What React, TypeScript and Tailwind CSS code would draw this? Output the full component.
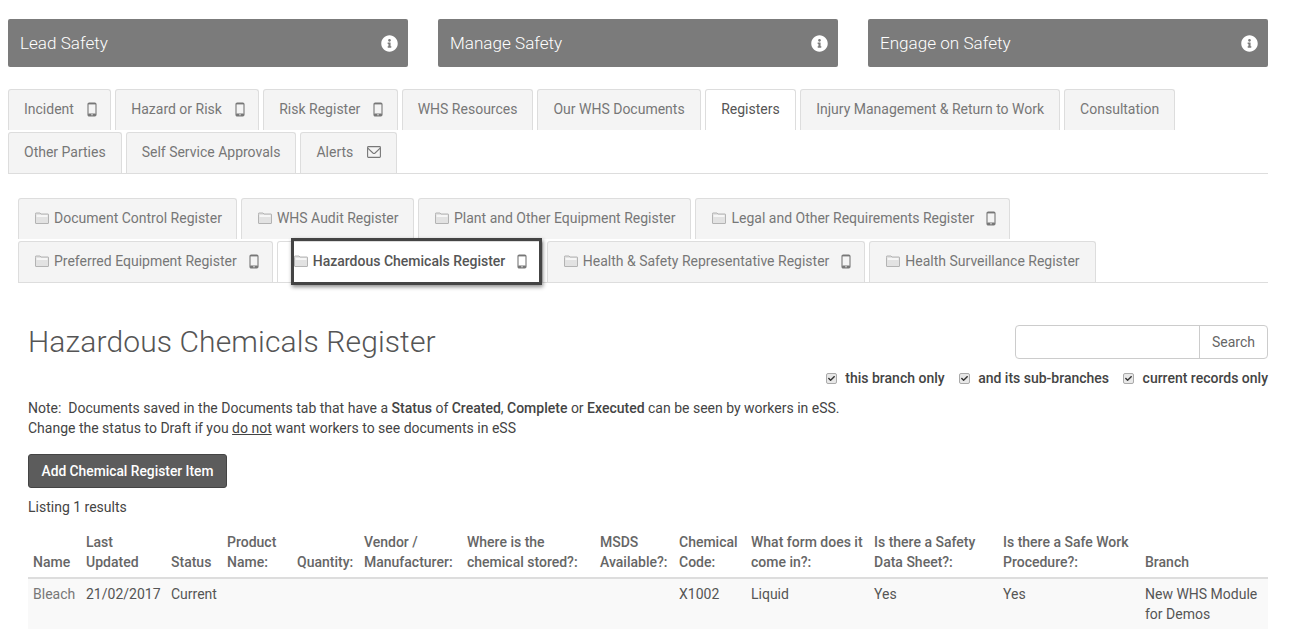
import { FaCheck, FaInfoCircle } from "react-icons/fa";

const Phone = () => (
  <svg viewBox="0 0 10 15" className="h-[15px] w-[10px]" fill="none">
    <rect x="1" y="1" width="8" height="13" rx="1.2" stroke="#777" strokeWidth="1.1" />
    <rect x="1" y="1" width="8" height="1.4" fill="#777" />
    <rect x="1" y="11.5" width="8" height="2.5" rx="0.8" fill="#777" />
    <circle cx="5" cy="12.7" r="0.7" fill="#f4f4f4" />
  </svg>
);

const Envelope = () => (
  <svg viewBox="0 0 14 12" className="ml-[14px] h-3 w-[14px]" fill="none" stroke="#777" strokeWidth="1.1">
    <rect x="0.6" y="0.6" width="12.8" height="10.8" rx="0.8" />
    <path d="M0.8 2.2 L5.9 7 Q7 7.9 8.1 7 L13.2 2.2" />
  </svg>
);

const Folder = () => (
  <svg viewBox="0 0 14 12" className="mr-[5px] h-3 w-3.5 shrink-0">
    <path d="M0.5 2.5 V1.5 Q0.5 1 1 1 H5 L6 2 H13 Q13.5 2 13.5 2.5 V11 Q13.5 11.5 13 11.5 H1 Q0.5 11.5 0.5 11 Z" fill="#e2e2e2" stroke="#a5a5a5" strokeWidth="0.8" />
    <rect x="1.5" y="3.2" width="11" height="1.6" fill="#fafafa" />
  </svg>
);

const topTabs = [
  { label: "Incident", icon: "phone" },
  { label: "Hazard or Risk", icon: "phone" },
  { label: "Risk Register", icon: "phone" },
  { label: "WHS Resources" },
  { label: "Our WHS Documents" },
  { label: "Registers", active: true },
  { label: "Injury Management & Return to Work" },
  { label: "Consultation" },
  { label: "Other Parties" },
  { label: "Self Service Approvals" },
  { label: "Alerts", icon: "mail" },
];

const subTabs = [
  { label: "Document Control Register", pad: "pr-[14px]" },
  { label: "WHS Audit Register", pad: "pr-[14.5px]" },
  { label: "Plant and Other Equipment Register", pad: "pr-[15px]" },
  { label: "Legal and Other Requirements Register", phone: true, pad: "pr-[15px]" },
  { label: "Preferred Equipment Register", phone: true, pad: "pr-[15px]" },
  { label: "Hazardous Chemicals Register", phone: true, active: true, pad: "pr-[16.5px]" },
  { label: "Health & Safety Representative Register", phone: true, pad: "pr-[15px]" },
  { label: "Health Surveillance Register", pad: "pr-[15px]" },
];

const columns = [
  { head: "Name", w: "w-[53px]", value: "Bleach" },
  { head: "Last Updated", w: "w-[85px]", value: "21/02/2017" },
  { head: "Status", w: "w-[56px]", value: "Current" },
  { head: "Product Name:", w: "w-[70px]", value: "" },
  { head: "Quantity:", w: "w-[67px]", value: "" },
  { head: "Vendor / Manufacturer:", w: "w-[103px]", value: "" },
  { head: "Where is the chemical stored?:", w: "w-[133px]", value: "" },
  { head: "MSDS Available?:", w: "w-[79px]", value: "" },
  { head: "Chemical Code:", w: "w-[72px]", value: "X1002" },
  { head: "What form does it come in?:", w: "w-[123px]", value: "Liquid" },
  { head: "Is there a Safety Data Sheet?:", w: "w-[129px]", value: "Yes" },
  { head: "Is there a Safe Work Procedure?:", w: "w-[142px]", value: "Yes" },
  { head: "Branch", w: "w-[128px]", value: "New WHS Module for Demos" },
];

const Banner = ({ title }: { title: string }) => (
  <div className="flex h-12 w-[400px] items-center justify-between rounded-[2px] bg-[#7b7b7b] pl-3 pr-[10.5px] text-white">
    <span className="text-[17.1px] font-light">{title}</span>
    <FaInfoCircle className="text-[17px]" />
  </div>
);

const Check = ({ label }: { label: string }) => (
  <label className="flex items-center gap-[8.5px]">
    <span className="flex size-[11px] items-center justify-center rounded-[2px] border border-[#aaa] bg-[#e8e8e8]">
      <FaCheck className="text-[7px] text-[#333]" />
    </span>
    {label}
  </label>
);

export default function App() {
  return (
    <div className="h-[631px] overflow-hidden bg-white font-['Roboto',sans-serif] text-[14px] leading-5 text-[#555]">
      <div className="flex gap-[30px] pl-2 pt-[19px]">
        <Banner title="Lead Safety" />
        <Banner title="Manage Safety" />
        <Banner title="Engage on Safety" />
      </div>

      <div className="ml-2 mr-[25px] mt-[22px] flex flex-wrap gap-y-[2px] border-b border-[#ddd]">
        {topTabs.map((t) => (
          <div
            key={t.label}
            className={
              t.active
                ? "mr-1 flex h-[41px] items-center rounded-t-[3px] border border-b-0 border-[#ddd] bg-white px-[15.5px] pb-[2px] text-[#555]"
                : "mr-1 flex h-[41px] items-center rounded-t-[3px] border border-b-0 border-[#ddd] bg-[#f4f4f4] px-[15px] pb-[2px] text-[#777]"
            }
          >
            {t.label}
            {t.icon === "phone" && (
              <span className="-mr-[1.7px] ml-[13px]">
                <Phone />
              </span>
            )}
            {t.icon === "mail" && <Envelope />}
          </div>
        ))}
      </div>

      <div className="relative ml-[18px] mr-[25px] mt-6 flex flex-wrap gap-y-[2px] border-b border-[#ddd]">
        {subTabs.map((t) => (
          <div
            key={t.label}
            className={
              t.active
                ? `mr-1 flex h-[41px] items-center rounded-t-[3px] border border-b-0 border-[#ddd] bg-white pb-[2px] pl-4 font-medium text-[#555] ${t.pad}`
                : `mr-1 flex h-[41px] items-center rounded-t-[3px] border border-b-0 border-[#ddd] bg-[#f4f4f4] pb-[2px] pl-4 text-[#777] ${t.pad}`
            }
          >
            <Folder />
            {t.label}
            {t.phone && (
              <span className="-mr-[2px] ml-3">
                <Phone />
              </span>
            )}
          </div>
        ))}
        <div className="pointer-events-none absolute left-[273px] top-10 h-[47px] w-[251px] border-[3px] border-[#444] shadow-[1px_2px_4px_rgba(0,0,0,0.45)]" />
      </div>

      <div className="px-[25px] pl-7">
        <div className="mt-[42px] flex items-start justify-between">
          <h1 className="text-[30px] font-light leading-[34px] tracking-[0.12px] text-[#555]">Hazardous Chemicals Register</h1>
          <div className="flex h-[34px] w-[253px] rounded border border-[#ccc]">
            <input className="min-w-0 flex-1 outline-none" aria-label="Search" />
            <div className="flex w-[68px] items-center justify-center border-l border-[#ccc] text-[#666]">Search</div>
          </div>
        </div>

        <div className="mt-[9px] flex justify-end gap-[14px] font-medium text-[#444]">
          <Check label="this branch only" />
          <Check label="and its sub-branches" />
          <Check label="current records only" />
        </div>

        <div className="mt-[10px] text-[#444]">
          <p>
            Note:&nbsp; Documents saved in the Documents tab that have a <b className="font-medium">Status</b> of{" "}
            <b className="font-medium">Created</b>, <b className="font-medium">Complete</b> or{" "}
            <b className="font-medium">Executed</b> can be seen by workers in eSS.
          </p>
          <p>
            Change the status to Draft if you <u>do not</u> want workers to see documents in eSS
          </p>
        </div>

        <button className="mt-4 h-[34px] w-[199px] rounded-[3px] border border-[#444] bg-[#5c5c5c] text-[13.8px] font-medium text-white">
          Add Chemical Register Item
        </button>

        <p className="mt-[9px] text-[#444]">Listing 1 results</p>

        <table className="mt-[10px] w-[1240px] table-fixed border-collapse">
          <colgroup>
            {columns.map((c) => (
              <col key={c.head} className={c.w} />
            ))}
          </colgroup>
          <thead>
            <tr className="border-b-2 border-[#ddd]">
              {columns.map((c) => (
                <th key={c.head} className="p-[5px] text-left align-bottom font-medium text-[#666]">
                  {c.head}
                </th>
              ))}
            </tr>
          </thead>
          <tbody>
            <tr className="bg-[#f9f9f9]">
              {columns.map((c, i) => (
                <td key={c.head} className={i === 0 ? "p-[5px] align-top text-[#777]" : "p-[5px] align-top text-[#555]"}>
                  {c.value}
                </td>
              ))}
            </tr>
          </tbody>
        </table>
      </div>
    </div>
  );
}
